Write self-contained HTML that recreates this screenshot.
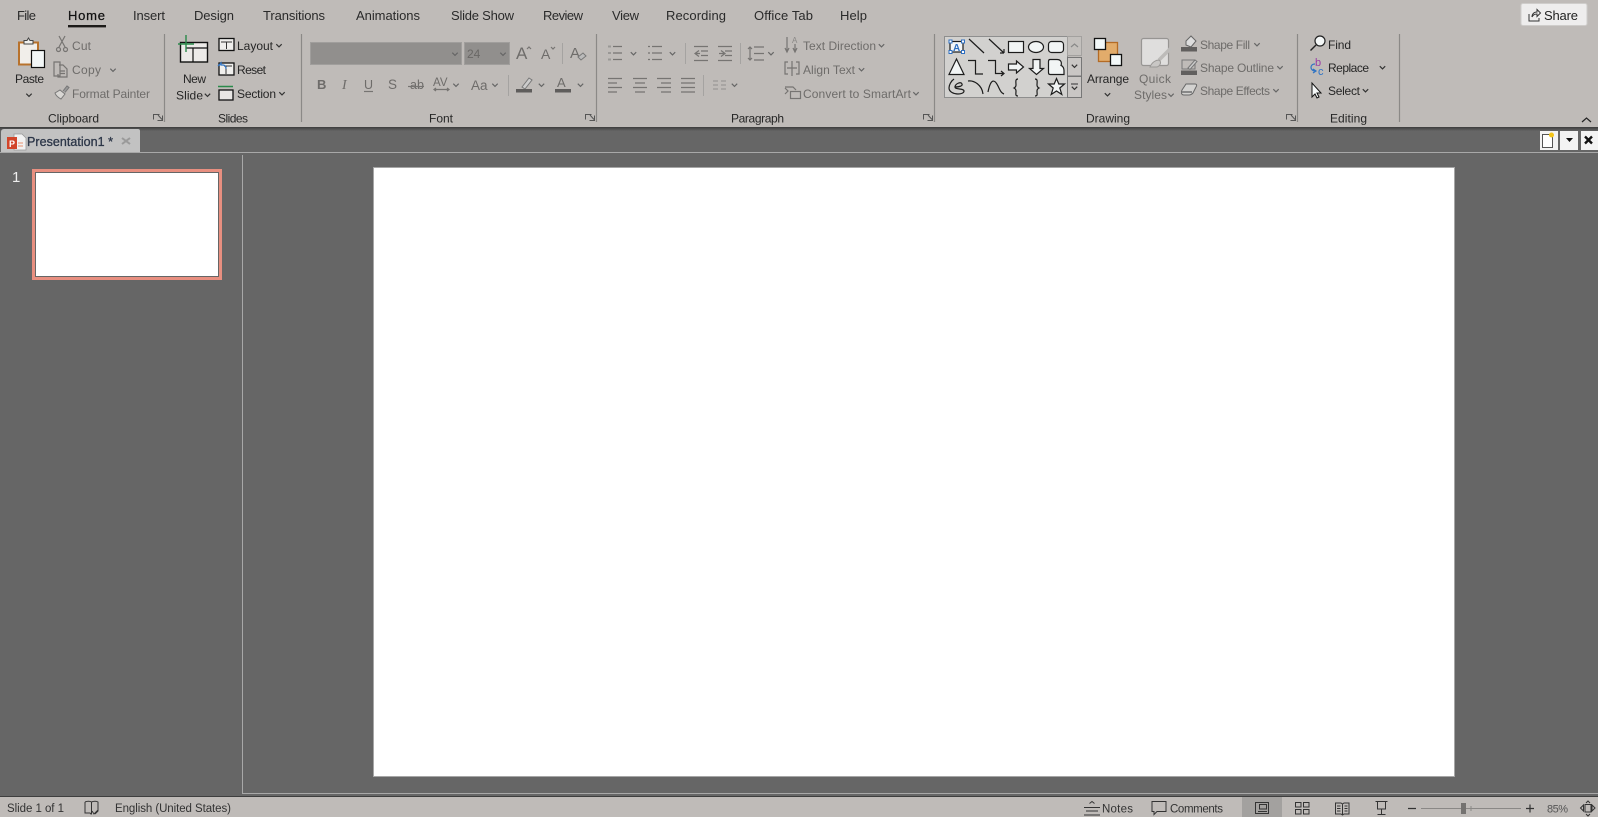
<!DOCTYPE html>
<html><head><meta charset="utf-8"><title>PowerPoint</title>
<style>
html,body{margin:0;padding:0;width:1598px;height:817px;overflow:hidden;background:#666}
svg{display:block}
text{font-family:"Liberation Sans",sans-serif;font-size:12px;fill:#262626}
.d{fill:#6e6c6a}
.t{font-size:13px;fill:#2a2a2a}
.i{fill:none;stroke:#1c1c1c;stroke-width:1.2}
.g{fill:none;stroke:#767472;stroke-width:1.2}
.s{stroke:#8b8987;stroke-width:1.2}
.f{stroke:#a5a3a1;stroke-width:1}
</style></head><body>
<svg width="1598" height="817" viewBox="0 0 1598 817" xmlns="http://www.w3.org/2000/svg">
<defs>
<path id="c" d="M-2.7,-1.3L0,1.4L2.7,-1.3" fill="none" stroke="#333" stroke-width="1.2"/>
<path id="cd" d="M-2.7,-1.3L0,1.4L2.7,-1.3" fill="none" stroke="#666" stroke-width="1.2"/>
<linearGradient id="sh" x1="0" y1="0" x2="0" y2="1"><stop offset="0" stop-color="#3c3c3c"/><stop offset="1" stop-color="#666"/></linearGradient>
</defs>
<rect width="1598" height="817" fill="#666"/>
<!-- ribbon -->
<rect width="1598" height="127" fill="#bfbbb8"/>
<rect y="127" width="1598" height="4" fill="url(#sh)"/>
<!-- tabs -->
<text class="t" x="17" y="20" textLength="19">File</text>
<text class="t" x="68" y="20" textLength="37" style="fill:#111;stroke:#111;stroke-width:.25">Home</text>
<rect x="68" y="25" width="38" height="2.4" fill="#1c1a18"/>
<text class="t" x="133" y="20" textLength="32">Insert</text>
<text class="t" x="194" y="20" textLength="40">Design</text>
<text class="t" x="263" y="20" textLength="62">Transitions</text>
<text class="t" x="356" y="20" textLength="64">Animations</text>
<text class="t" x="451" y="20" textLength="63">Slide Show</text>
<text class="t" x="543" y="20" textLength="40">Review</text>
<text class="t" x="612" y="20" textLength="27">View</text>
<text class="t" x="666" y="20" textLength="60">Recording</text>
<text class="t" x="754" y="20" textLength="59">Office Tab</text>
<text class="t" x="840" y="20" textLength="27">Help</text>
<!-- share -->
<rect x="1521" y="3.5" width="66" height="22" rx="2" fill="#eeeded" stroke="#cfcdcb"/>
<path d="M1529,14v7h10v-3M1532,17c0,-3 2,-5 5,-5v-2.500l3.500,3.500 -3.500,3.500v-2.500c-2,0 -4,1 -5,3" fill="none" stroke="#333" stroke-width="1"/>
<text x="1544" y="20" textLength="34" style="font-size:13px;fill:#222">Share</text>
<!-- separators -->
<g class="s">
<path d="M164.500,34V122M301.500,34V122M596.500,34V122M934.500,34V122M1297.500,34V122M1399.500,34V122"/>
</g>
<g class="f"><path d="M562.500,43V64M508.500,75V96M685.500,43V64M740.500,43V64M703.500,75V96"/></g>
<!-- group labels -->
<text x="48" y="122.500" textLength="51">Clipboard</text>
<text x="218" y="122.500" textLength="30">Slides</text>
<text x="429" y="122.500" textLength="24">Font</text>
<text x="731" y="122.500" textLength="53">Paragraph</text>
<text x="1086" y="122.500" textLength="44">Drawing</text>
<text x="1330" y="122.500" textLength="37">Editing</text>
<!-- launchers -->
<g fill="none" stroke="#555" stroke-width="1">
<path d="M153.500,119.500v-5h6M158,115l4,4.500M162.500,115.500v5h-5"/>
<path d="M585.500,119.500v-5h6M590,115l4,4.500M594.500,115.500v5h-5"/>
<path d="M923.500,119.500v-5h6M928,115l4,4.500M932.500,115.500v5h-5"/>
<path d="M1286.500,119.500v-5h6M1291,115l4,4.500M1295.500,115.500v5h-5"/>
</g>
<path d="M1582,122l4.500,-4 4.500,4" fill="none" stroke="#222" stroke-width="1.200"/>

<!-- CLIPBOARD -->
<rect x="19" y="42.500" width="19" height="22" fill="#f1eeea" stroke="#b8722c" stroke-width="2"/>
<path d="M24,43v-2.500h3l1.500,-2.500 1.500,2.500h3V44H24z" fill="#f0f0ee" stroke="#444" stroke-width="1"/>
<rect x="31.500" y="50.500" width="13" height="17" fill="#f3f7f7" stroke="#111" stroke-width="1.200"/>
<text x="15" y="83" textLength="29">Paste</text>
<use href="#c" x="29" y="95"/>
<path class="g" d="M59,36l6,11M65,36l-6,11"/><circle class="g" cx="58.500" cy="49.500" r="2"/><circle class="g" cx="65.500" cy="49.500" r="2"/>
<text class="d" x="72" y="50" textLength="19">Cut</text>
<path class="g" d="M54,62h6v14h-6zM59,65h4l4,4v8h-9v-3M60,71h5M60,73.500h5"/>
<text class="d" x="72" y="74" textLength="29">Copy</text>
<use href="#cd" x="113" y="70"/>
<path d="M55,93l5,-3 5,4 -4,5c-2,-1 -5,-3 -6,-6z" fill="#d8d6d3" stroke="#777"/><path d="M63,91l4,-5 2,1.500 -4,5" fill="#999" stroke="#777"/>
<text class="d" x="72" y="98" textLength="78">Format Painter</text>

<!-- SLIDES -->
<rect x="180.500" y="42.500" width="27" height="19.500" fill="#eceae8" stroke="#111" stroke-width="1.400"/>
<path d="M186,48H207M193,48V62" stroke="#111" fill="none" stroke-width="1.200"/>
<path d="M186,35V52M178,44H194" stroke="#2a8a4a" stroke-width="1.400"/>
<text x="183" y="83" textLength="23">New</text>
<text x="176" y="99.500" textLength="27">Slide</text>
<use href="#c" x="207.500" y="95"/>
<rect x="219" y="38.500" width="15" height="12" fill="#f0efed" stroke="#111" stroke-width="1.300"/><path d="M221,42H232M226.500,42V49" stroke="#333"/>
<text x="237" y="50" textLength="36">Layout</text><use href="#c" x="279" y="45.500"/>
<rect x="219" y="63" width="15" height="12" fill="#f0efed" stroke="#111" stroke-width="1.300"/><path d="M224,66H232M226,66V74" stroke="#333"/><path d="M218,66l3,-3v2h2c2,0 3,2 3,4" fill="none" stroke="#2f73c4" stroke-width="1.300"/>
<text x="237" y="74" textLength="29">Reset</text>
<path d="M218,86.500H233" stroke="#2a8a4a" stroke-width="1.500"/><rect x="219" y="90" width="14" height="10" fill="#e9e7e5" stroke="#111" stroke-width="1.300"/>
<text x="237" y="98" textLength="39">Section</text><use href="#c" x="282" y="93.500"/>

<!-- FONT -->
<rect x="310.500" y="42.500" width="151" height="22" fill="#918f8d" stroke="#a09e9c"/>
<rect x="464.500" y="42.500" width="45" height="22" fill="#918f8d" stroke="#a09e9c"/>
<use href="#cd" x="455" y="54"/><use href="#cd" x="503" y="54"/>
<text class="d" x="467" y="58" style="fill:#6a6866">24</text>
<text class="d" x="516" y="59" style="font-size:17px">A</text><path class="g" d="M527,49l2,-2 2,2"/>
<text class="d" x="541" y="59" style="font-size:14px">A</text><path class="g" d="M551,47l2,2 2,-2"/>
<text class="d" x="570" y="58" style="font-size:15px">A</text><path d="M578,57l5,-4 3,3 -5,4z" fill="#bbb" stroke="#777"/>
<text class="d" x="317" y="89" style="font-weight:bold;font-size:13px">B</text>
<text class="d" x="342" y="89" style="font-style:italic;font-family:'Liberation Serif',serif;font-size:14px">I</text>
<text class="d" x="364" y="89" style="font-size:12.500px">U</text><path class="g" d="M364,91.500h9"/>
<text class="d" x="388" y="89" style="font-size:13.500px">S</text>
<text class="d" x="410" y="89" style="font-size:12.500px">ab</text><path class="g" d="M408,86.500h16"/>
<text class="d" x="433" y="86" style="font-size:11.500px">AV</text><path class="g" d="M434,89.500h15M436,88l-2,1.500 2,1.500M447,88l2,1.500 -2,1.500"/>
<use href="#cd" x="456" y="85"/>
<text class="d" x="471" y="90" style="font-size:13.500px">Aa</text>
<use href="#cd" x="495" y="85"/>
<path d="M522,87l7,-9 3,2 -7,9z" fill="#ccc" stroke="#777"/><rect x="516" y="89" width="16" height="3.500" fill="#5f5d5c"/>
<use href="#cd" x="541.500" y="85"/>
<text class="d" x="557" y="87" style="font-size:13px">A</text><rect x="555" y="89" width="16" height="3.500" fill="#5f5d5c"/>
<use href="#cd" x="580.500" y="85"/>

<!-- PARAGRAPH -->
<g class="g">
<path d="M613,46.500h9M613,53h9M613,59.500h9"/>
<path d="M608,46.500h3M608,53h3M608,59.500h3" style="stroke:#9a9896;stroke-width:2"/>
<path d="M652,46.500h10M652,53h10M652,59.500h10M648,46.500h2M648,53h2M648,59.500h2"/>
<path d="M694,46.500h14M701,51h7M701,55.500h7M694,60.500h14M699,50.500l-4,3 4,3M695,53.500h5"/>
<path d="M718,46.500h14M725,51h7M725,55.500h7M718,60.500h14M721,50.500l4,3 -4,3M719,53.500h5"/>
<path d="M754,47h10M754,53.500h10M754,60h10M750,47v13M748,49l2,-2 2,2M748,58l2,2 2,-2"/>
<path d="M608,78.500h14M608,83h9M608,87.500h14M608,92h9"/>
<path d="M633,78.500h14M635,83h10M633,87.500h14M635,92h10"/>
<path d="M657,78.500h14M661,83h10M657,87.500h14M661,92h10"/>
<path d="M681,78.500h14M681,83h14M681,87.500h14M681,92h14"/>
<path d="M713,81h5M713,85h5M713,89h5M721,81h5M721,85h5M721,89h5" style="stroke:#9a9896"/>
<path d="M787,37v15M785,48l2,4 2,-4M795,44v8M793,48l2,4 2,-4"/>
<path d="M788,62h-3v12h3M796,62h3v12h-3M787,68h10M792,61v15"/>
<path d="M785,87h8l3,3M785,94l3,-3 -3,-3"/>
<rect x="790.500" y="91.500" width="10" height="7"/>
</g>
<text x="792" y="43" style="font-size:8px;fill:#8a8886">A</text>
<use href="#cd" x="633.500" y="53.500"/><use href="#cd" x="672.500" y="53.500"/><use href="#cd" x="771" y="53.500"/><use href="#cd" x="734.500" y="85"/>
<text class="d" x="803" y="50" textLength="73">Text Direction</text><use href="#cd" x="881.500" y="45.500"/>
<text class="d" x="803" y="74" textLength="52">Align Text</text><use href="#cd" x="861.500" y="69.500"/>
<text class="d" x="803" y="98" textLength="108">Convert to SmartArt</text><use href="#cd" x="916" y="93.500"/>

<!-- DRAWING -->
<rect x="944.500" y="36.500" width="123" height="61" fill="#d2d1cf" stroke="#8e8e8e"/>
<rect x="1067.500" y="36.500" width="14" height="19" fill="#c3c0bd" stroke="#a3a19f"/>
<rect x="1067.500" y="57.500" width="14" height="18.500" fill="#c9c6c4" stroke="#777"/>
<rect x="1067.500" y="76.500" width="14" height="21" fill="#c9c6c4" stroke="#777"/>
<path d="M1071,47l3.500,-3 3.500,3" fill="none" stroke="#888" stroke-width="1.200"/>
<use href="#c" x="1074.500" y="66"/>
<path d="M1071,84h7" stroke="#333"/><use href="#c" x="1074.500" y="88"/>
<g class="i" fill="none">
<rect x="950" y="41.500" width="13" height="10.500" style="fill:#f2f5f7"/>
<path d="M969,39l15,14M989,39l15,14M1004,53v-4M1004,53h-4"/>
<rect x="1008.500" y="41.500" width="15" height="11" style="fill:#f2f5f5"/>
<ellipse cx="1036" cy="47" rx="7.500" ry="5.500" style="fill:#f2f5f5"/>
<rect x="1048.500" y="41.500" width="15" height="11" rx="3" style="fill:#f2f5f5"/>
<path d="M956.500,59l-7.500,15.500h15z" style="fill:#f2f5f5"/>
<path d="M968,60.500h7.500v13.500h7.500M988,60.500h7.500v13h7.500M1001,71l3,2.500 -3,2.500"/>
<path d="M1008.500,64h8v-3l7,6 -7,6v-3h-8z" style="fill:#f2f5f5"/>
<path d="M1033,59.500h7v9h3.500l-7,6 -7,-6h3.500z" style="fill:#f2f5f5"/>
<path d="M1050,74.500c-1,0 -1.500,-1 -1.500,-2v-11c0,-1 .5,-2 1.500,-2h7c4,0 5,3 4,6 2,.5 3,3 3,5v4z" style="fill:#f2f5f5"/>
<path d="M954,79c-3,2 -5,6 -5,9 0,4 5,6 9,6 3,0 6,-1 6,-3 0,-3 -9,-1 -9,-4 0,-3 6,-6 7,-3 1,2 -3,3 -7,3"/>
<path d="M968,81c6,-1 14,4 15,13M988,92c3,-15 7,-12 10,-6 2,4 3,7 6,8"/>
<path d="M1018,79c-3,0 -2,3 -2,6 0,2 -1,2.500 -2,3 1,.5 2,1 2,3 0,3 -1,5 2,5M1035,79c3,0 2,3 2,6 0,2 1,2.500 2,3 -1,.5 -2,1 -2,3 0,3 1,5 -2,5"/>
<path d="M1056.500,78.500l2.300,5.500h5.700l-4.700,4 2,6.500 -5.300,-3.500 -5.300,3.500 2,-6.500 -4.700,-4h5.700z" style="fill:#f2f5f5"/>
</g>
<g fill="#fff" stroke="#2f6fc0"><rect x="949" y="40" width="3" height="3"/><rect x="961.500" y="40" width="3" height="3"/><rect x="949" y="50.500" width="3" height="3"/><rect x="961.500" y="50.500" width="3" height="3"/></g>
<text x="953" y="51" style="font-size:10px;font-weight:bold;fill:#2f6fc0">A</text>
<rect x="1098.500" y="42.500" width="19" height="19" fill="#e2ac6b" stroke="#b46b25" stroke-width="1.300"/>
<rect x="1094.500" y="38.500" width="11" height="11" fill="#f3f8f8" stroke="#111" stroke-width="1.300"/>
<rect x="1110.500" y="54.500" width="11" height="11" fill="#f3f8f8" stroke="#111" stroke-width="1.300"/>
<text x="1087" y="83" textLength="42">Arrange</text>
<use href="#c" x="1107.500" y="94.500"/>
<rect x="1141.500" y="38.500" width="27" height="27" rx="2" fill="#dfdedd" stroke="#979593" stroke-width="1.200"/>
<path d="M1171,48l-12,12" stroke="#bdbbb9" stroke-width="3.500"/><path d="M1150,67c2,-5 6,-7 9,-7 3,2 1,6 -2,7z" fill="#c9c7c5" stroke="#9a9896"/>
<text class="d" x="1139" y="83" textLength="32">Quick</text>
<text class="d" x="1134" y="99" textLength="33">Styles</text>
<use href="#cd" x="1171" y="95"/>
<path d="M1186,41l5,-5 5,5 -5,6 -5,-2z" fill="#ddd" stroke="#666"/><rect x="1181" y="47" width="16" height="4.500" fill="#615f5e"/>
<text class="d" x="1200" y="49" textLength="50">Shape Fill</text><use href="#cd" x="1257" y="44.500"/>
<rect x="1182" y="60" width="13" height="9" fill="none" stroke="#777"/><path d="M1188,68l7,-8 2,1.500 -7,8z" fill="#ccc" stroke="#777"/><rect x="1181" y="70.500" width="16" height="4.500" fill="#615f5e"/>
<text class="d" x="1200" y="72" textLength="74">Shape Outline</text><use href="#cd" x="1280" y="67.500"/>
<path d="M1182,90l4,-6h9c2,0 2,2 1,3l-3,6c-1,1 -2,2 -4,2h-5c-3,0 -3,-3 -2,-5z" fill="#d3d2d0" stroke="#666"/><path d="M1182,92h10" stroke="#888" stroke-width="2"/>
<text class="d" x="1200" y="95" textLength="70">Shape Effects</text><use href="#cd" x="1276" y="90.500"/>

<!-- EDITING -->
<circle cx="1320" cy="41" r="5" fill="#f3f6f6" stroke="#222" stroke-width="1.200"/><path d="M1316,45l-5.500,5.500" stroke="#222" stroke-width="1.400"/>
<text x="1328" y="49" textLength="23">Find</text>
<text x="1315" y="66" style="font-size:11px;fill:#9a3ca5">b</text><text x="1318" y="75" style="font-size:11px;fill:#2f73c4">c</text>
<path d="M1315,64c-3,0 -4,2 -4,3.500 0,2 2,3.500 4,3.500M1313,69l3,2 -3,2" fill="none" stroke="#2f73c4" stroke-width="1.200"/>
<text x="1328" y="72" textLength="41">Replace</text><use href="#c" x="1382.500" y="67.500"/>
<path d="M1312,83v14l3,-3 2,4 2,-1 -2,-4h4z" fill="#f5f8f8" stroke="#111" stroke-width="1"/>
<text x="1328" y="95" textLength="32">Select</text><use href="#c" x="1365.500" y="90.500"/>

<!-- document tab bar -->
<path d="M1,152V132q0,-3 3,-3H138q2,0 2,2V152z" fill="#c2c2c2"/>
<rect y="152" width="1598" height="1" fill="#a8a8a8"/>
<path d="M14,134h8l4,4v12H14z" fill="#f2f2f2" stroke="#999" stroke-width=".8"/>
<rect x="7" y="137" width="10" height="12" fill="#d2452a"/>
<text x="9" y="147" style="font-size:9px;font-weight:bold;fill:#fff">P</text>
<path d="M18,143h5M18,146h5" stroke="#e89270"/>
<text x="27" y="146" textLength="86" style="font-size:12.500px;fill:#2c3648;stroke:#2c3648;stroke-width:.3">Presentation1 *</text>
<path d="M122,138l8,6M130,138l-8,6" stroke="#9a9a9a" stroke-width="2"/>
<g fill="#f3f3f3"><rect x="1540" y="131" width="18" height="19"/><rect x="1560" y="131" width="18" height="19"/><rect x="1581" y="131" width="17" height="19"/></g>
<rect x="1542.500" y="134.500" width="10" height="13" fill="#fff" stroke="#555"/>
<circle cx="1551.500" cy="135" r="2.500" fill="#f5c518"/>
<path d="M1566,138h7l-3.500,4z" fill="#111"/>
<path d="M1585,136.500l7,7M1592,136.500l-7,7" stroke="#111" stroke-width="2.400"/>

<!-- panes -->
<rect x="242" y="155" width="1" height="639" fill="#a8a8a8"/>
<rect x="243" y="793" width="1355" height="1" fill="#a8a8a8"/>
<text x="12" y="182" style="font-size:15px;fill:#eee">1</text>
<rect x="33.500" y="170.500" width="187" height="108" fill="#fff" stroke="#e88f80" stroke-width="3"/>
<rect x="35.500" y="172.500" width="183" height="104" fill="none" stroke="#666" stroke-width="1"/>
<rect x="373.500" y="167.500" width="1081" height="609" fill="#fff" stroke="#a6a6a6"/>

<!-- status bar -->
<rect y="796" width="1598" height="1" fill="#3e3e3e"/>
<rect y="797" width="1598" height="20" fill="#bfbbb8"/>
<text x="7" y="812" textLength="57" style="font-size:11.500px;fill:#333">Slide 1 of 1</text>
<text x="115" y="812" textLength="116" style="font-size:11.500px;fill:#333">English (United States)</text>
<text x="1102" y="812.500" textLength="31" style="font-size:11.500px;fill:#333">Notes</text>
<text x="1170" y="812.500" textLength="53" style="font-size:11.500px;fill:#333">Comments</text>
<text x="1547" y="812.500" textLength="21" style="font-size:11px;fill:#555">85%</text>
<path d="M85,802c2,-1 5,-1 6.500,0 2,-1 5,-1 6.500,0v9l-3,3M85,802v11h5l1.500,1.500M91.500,802v12M92,811l2,3 4,-4" fill="none" stroke="#333" stroke-width="1"/>
<rect x="1242" y="797" width="40" height="20" fill="#a3a19f"/>
<g fill="none" stroke="#333" stroke-width="1">
<path d="M1084,807.500h16M1086,811h12M1084,815h16M1089.500,803.500l2.500,-2 2.500,2"/>
<path d="M1152,801.500h14v10h-9l-3,3v-3h-2z"/>
<rect x="1255.500" y="802.500" width="13" height="11"/><rect x="1259.500" y="804.500" width="7" height="4.500"/><path d="M1258,811.500h9"/>
<rect x="1295.500" y="802.500" width="5.500" height="4.500"/><rect x="1303.500" y="802.500" width="5.500" height="4.500"/><rect x="1295.500" y="809.500" width="5.500" height="4.500"/><rect x="1303.500" y="809.500" width="5.500" height="4.500"/>
<path d="M1335.500,803h5.500l1.500,1 1.500,-1h5v11h-5l-1.500,1 -1.500,-1h-5.500zM1342.500,804v11M1337,806h3.500M1337,808.500h3.500M1337,811h3.500M1344.500,806h3M1344.500,808.500h3M1344.500,811h3"/>
<path d="M1375.500,801.500h12M1377.500,801.500v7.500h8v-7.500M1381.500,809v5M1377.500,814.500h8"/>
<path d="M1580.500,808l3,-3v6zM1595,808l-3,-3v6z"/>
<rect x="1585" y="804.500" width="6" height="7.500"/><path d="M1586,803l2,-2 2,2M1586,814l2,2 2,-2"/>
</g>
<path d="M1408,808.500h8M1526,808.500h8M1530,804.500v8" stroke="#333" stroke-width="1.200"/>
<path d="M1421,808.500h100" stroke="#8a8886"/><path d="M1471,806v5" stroke="#8a8886"/>
<rect x="1461" y="803" width="5" height="11" fill="#747270"/>
</svg>
</body></html>
